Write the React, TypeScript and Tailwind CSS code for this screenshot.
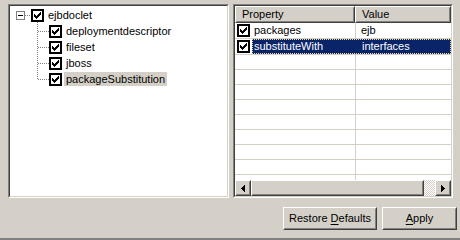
import type { ReactNode } from 'react'

const FACE = 'bg-[#d4d0c8]'

function CheckMark({ color = '#000' }: { color?: string }) {
  // classic 7x7 tick, one 3px column per x
  const tops = [2, 3, 4, 3, 2, 1, 0]
  return (
    <svg width="7" height="7" viewBox="0 0 7 7" shapeRendering="crispEdges">
      {tops.map((t, x) => (
        <rect key={x} x={x} y={t} width="1" height="3" fill={color} />
      ))}
    </svg>
  )
}

function Check() {
  return (
    <span className="flex w-[13px] h-[13px] shrink-0 border-2 border-black bg-white items-center justify-center">
      <CheckMark />
    </span>
  )
}

function Raised({ className = '', children }: { className?: string; children?: ReactNode }) {
  return (
    <div className={`flex border border-t-white border-l-white border-b-[#404040] border-r-[#404040] ${FACE} ${className}`}>
      <div className="flex flex-1 items-center justify-center border border-t-[#d4d0c8] border-l-[#d4d0c8] border-b-[#808080] border-r-[#808080]">
        {children}
      </div>
    </div>
  )
}

function Sunken({ className = '', children }: { className?: string; children?: ReactNode }) {
  return (
    <div className={`flex border border-t-[#808080] border-l-[#808080] border-b-white border-r-white ${className}`}>
      <div className="relative flex flex-col flex-1 min-w-0 bg-white border border-t-[#404040] border-l-[#404040] border-b-[#d4d0c8] border-r-[#d4d0c8] overflow-hidden">
        {children}
      </div>
    </div>
  )
}

function Dots({ x, y, len, vertical }: { x: number; y: number; len: number; vertical?: boolean }) {
  const pts = Array.from({ length: Math.ceil(len / 2) }, (_, i) => i * 2)
  return (
    <>
      {pts.map((d) => (
        <rect key={d} x={vertical ? x : x + d} y={vertical ? y + d : y} width="1" height="1" fill="#808080" />
      ))}
    </>
  )
}

function TreeRow({ indent, label, selected, root }: { indent: string; label: string; selected?: boolean; root?: boolean }) {
  return (
    <div className={`flex items-center h-[16px] ${indent}`}>
      {root && (
        <span className="flex w-[9px] h-[9px] mr-[6px] border border-[#808080] bg-white items-center justify-center">
          <span className="w-[5px] h-[1px] bg-black" />
        </span>
      )}
      <Check />
      <span className={`ml-[2px] px-[2px] h-[14px] leading-[14px] whitespace-nowrap ${selected ? FACE : ''}`}>{label}</span>
    </div>
  )
}

function Arrow({ dir }: { dir: 'left' | 'right' }) {
  return (
    <svg width="4" height="7" viewBox="0 0 4 7" shapeRendering="crispEdges">
      {[0, 1, 2, 3].map((i) => {
        const x = dir === 'right' ? i : 3 - i
        return <rect key={i} x={x} y={i} width="1" height={7 - i * 2} fill="#000" />
      })}
    </svg>
  )
}

export default function App() {
  const emptyRows = Array.from({ length: 10 })
  return (
    <div className={`w-[460px] h-[240px] flex flex-col ${FACE} text-[11px] text-black font-['Liberation_Sans',Arial,sans-serif] overflow-hidden`}>
      <div className="flex mt-[4px] pl-[8px] gap-[4px]">
        <Sunken className="w-[221px] h-[194px]">
          <svg className="absolute left-0 top-0" width="60" height="80" shapeRendering="crispEdges">
            <Dots x={15} y={9} len={6} />
            <Dots x={27} y={16} len={58} vertical />
            {[25, 41, 57, 73].map((y) => (
              <Dots key={y} x={28} y={y} len={11} />
            ))}
          </svg>
          <div className="flex flex-col pt-[1px]">
            <TreeRow root indent="pl-[6px]" label="ejbdoclet" />
            <TreeRow indent="pl-[39px]" label="deploymentdescriptor" />
            <TreeRow indent="pl-[39px]" label="fileset" />
            <TreeRow indent="pl-[39px]" label="jboss" />
            <TreeRow indent="pl-[39px]" label="packageSubstitution" selected />
          </div>
        </Sunken>

        <Sunken className="w-[220px] h-[194px]">
          <div className="flex h-[17px] shrink-0">
            <Raised className="w-[120px]">
              <span className="flex-1 pl-[5px] leading-none">Property</span>
            </Raised>
            <Raised className="flex-1">
              <span className="flex-1 pl-[5px] leading-none">Value</span>
            </Raised>
          </div>

          <div className="flex flex-col flex-1 overflow-hidden">
            <div className="flex h-[16px] shrink-0 border-b border-[#d4d0c8]">
              <div className="flex items-center w-[121px] pl-[2px] border-r border-[#d4d0c8]">
                <Check />
                <span className="ml-[4px]">packages</span>
              </div>
              <div className="flex items-center pl-[5px]">ejb</div>
            </div>

            <div className="flex h-[16px] shrink-0 border-b border-[#d4d0c8]">
              <div className="flex items-center pl-[2px] pr-[2px]">
                <Check />
              </div>
              <div className="flex flex-1 bg-[#0a246a] text-white border border-dotted border-[#f5db95]">
                <div className="flex items-center w-[104px] pl-[1px]">substituteWith</div>
                <div className="flex items-center pl-[5px]">interfaces</div>
              </div>
            </div>

            {emptyRows.map((_, i) => (
              <div key={i} className="flex h-[15px] shrink-0 border-b border-[#d4d0c8]">
                <div className="w-[121px] border-r border-[#d4d0c8]" />
              </div>
            ))}
          </div>

          <div className="flex h-[16px] shrink-0">
            <Raised className="w-[16px]">
              <Arrow dir="left" />
            </Raised>
            <Raised className="w-[173px]" />
            <div className="flex-1 bg-[repeating-conic-gradient(#ffffff_0%_25%,#d4d0c8_0%_50%)] bg-[length:2px_2px]" />
            <Raised className="w-[16px]">
              <Arrow dir="right" />
            </Raised>
          </div>
        </Sunken>
      </div>

      <div className="flex justify-end gap-[5px] pr-[3px] mt-[9px]">
        <Raised className="w-[94px] h-[23px]">
          <span>
            Restore <span className="underline underline-offset-[2px]">D</span>efaults
          </span>
        </Raised>
        <Raised className="w-[75px] h-[23px]">
          <span>
            <span className="underline underline-offset-[2px]">A</span>pply
          </span>
        </Raised>
      </div>

      <div className="flex-1" />
      <div className="h-[2px] bg-[#808080]" />
    </div>
  )
}
